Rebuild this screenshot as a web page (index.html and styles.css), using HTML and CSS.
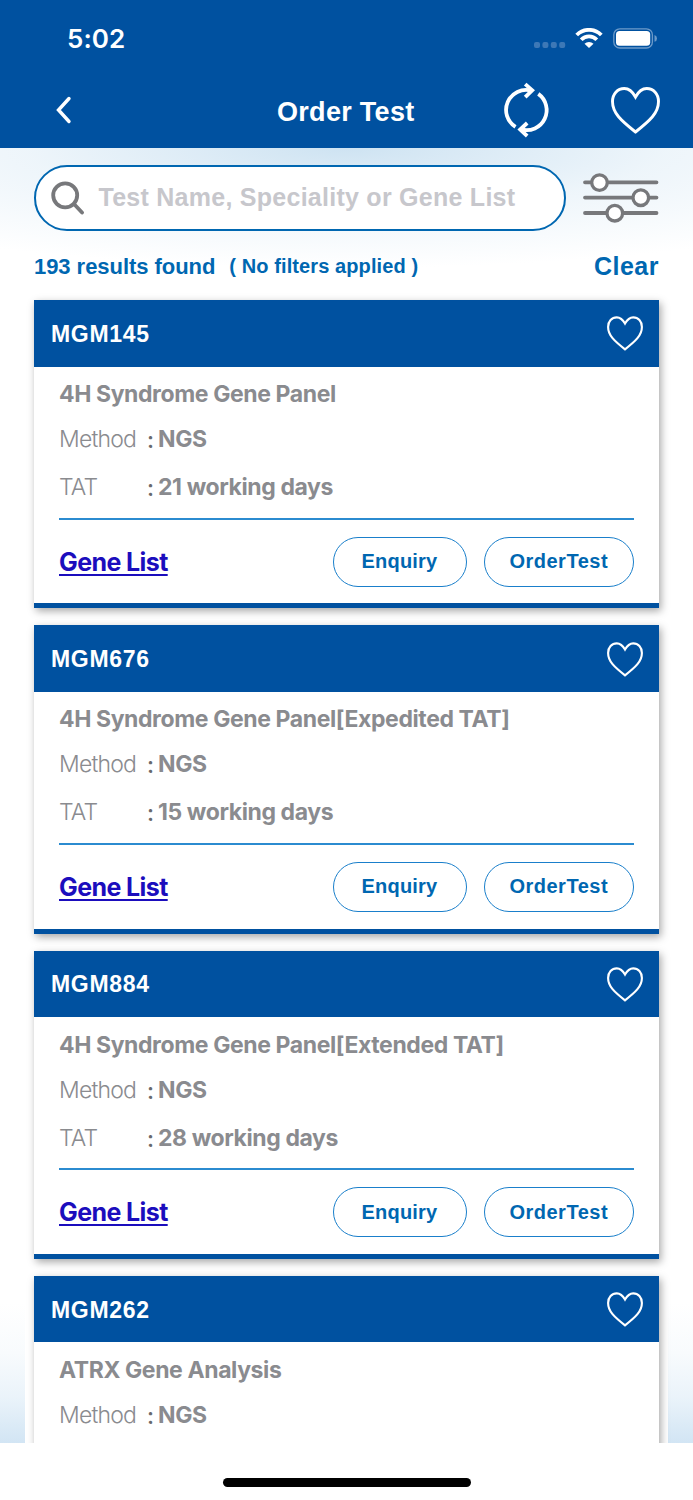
FILE: index.html
```
<!DOCTYPE html>
<html lang="en">

<head>
    <meta charset="UTF-8">
    <meta name="viewport" content="width=device-width, initial-scale=1.0">
    <title>Order Test</title>
    <link rel="stylesheet" href="styles.css">
</head>

<body>
    <svg class="defs" width="0" height="0">
        <symbol id="heart" viewBox="0 0 49 47">
            <path d="M24.5 10 C21.5 4.5 18 1.5 13.3 1.5 C6.5 1.5 1.5 7 1.5 14.5 C1.5 26 10 33.5 24.5 45 C39 33.5 47.5 26 47.5 14.5 C47.5 7 42.5 1.5 35.7 1.5 C31 1.5 27.5 4.5 24.5 10 Z" />
        </symbol>
    </svg>

    <header class="header">
        <div class="status-bar">
            <span class="time">5:02</span>
            <div class="status-icons">
                <svg class="signal" width="32" height="6" viewBox="0 0 32 6">
                    <rect x="0" width="6" height="6" rx="2" />
                    <rect x="8.4" width="6" height="6" rx="2" />
                    <rect x="16.8" width="6" height="6" rx="2" />
                    <rect x="25.2" width="6" height="6" rx="2" />
                </svg>
                <svg class="wifi" width="28" height="20" viewBox="0 0 28 20">
                    <path d="M1.7 7 A17.2 17.2 0 0 1 26.3 7" />
                    <path d="M6.2 11.8 A10.8 10.8 0 0 1 21.8 11.8" />
                    <path class="dot" d="M14 20 L9.5 15.7 A6.5 6.5 0 0 1 18.5 15.7 Z" />
                </svg>
                <svg class="battery" width="45" height="21" viewBox="0 0 45 21">
                    <rect class="case" x="0.8" y="0.8" width="38.6" height="19.2" rx="6" />
                    <rect x="3" y="3" width="34.2" height="14.8" rx="3.6" />
                    <path class="cap" d="M41.5 7 Q44 8 44 10.4 Q44 12.8 41.5 13.8 Z" />
                </svg>
            </div>
        </div>
        <div class="nav-bar">
            <svg class="back" width="16" height="28" viewBox="0 0 16 28">
                <path d="M13 2.5 L2.5 14 L13 25.5" />
            </svg>
            <h1>Order Test</h1>
            <svg class="refresh" width="46" height="56" viewBox="0 0 46 56">
                <path d="M11.5 44.9 A20 20 0 0 1 27.2 8.6" />
                <path d="M21.2 2.2 L28.2 8.4 L21.2 15.2" />
                <path d="M34.3 11.9 A20 20 0 0 1 17.2 47.4" />
                <path d="M23.2 41 L16.2 47.6 L23.2 54" />
            </svg>
            <svg class="heart"><use href="#heart" /></svg>
        </div>
    </header>

    <main class="content">
        <div class="search-row">
            <div class="search-box">
                <svg width="34" height="34" viewBox="0 0 34 34">
                    <circle cx="14.2" cy="14.3" r="12" />
                    <path d="M23 23 L31 31.5" />
                </svg>
                <span>Test Name, Speciality or Gene List</span>
            </div>
            <svg class="filter" width="76" height="50" viewBox="0 0 76 50">
                <path d="M2 9.3 H73.5 M2 24.6 H73.5 M2 40 H73.5" />
                <circle cx="16.5" cy="9.6" r="7.8" />
                <circle cx="57.8" cy="24.7" r="7.8" />
                <circle cx="31.8" cy="40.2" r="7.8" />
            </svg>
        </div>

        <div class="result-row">
            <span class="count">193 results found</span>
            <span class="applied">( No filters applied )</span>
            <span class="clear">Clear</span>
        </div>

        <div class="list">
            <div class="card">
                <div class="card-header">
                    <span class="code">MGM145</span>
                    <svg class="heart"><use href="#heart" /></svg>
                </div>
                <div class="card-body">
                    <div class="name">4H Syndrome Gene Panel</div>
                    <div class="row"><span class="label">Method</span><span class="colon">:</span><b>NGS</b></div>
                    <div class="row tat"><span class="label">TAT</span><span class="colon">:</span><b>21 working days</b></div>
                    <div class="actions">
                        <a class="gene-list" href="#">Gene List</a>
                        <button class="enquiry">Enquiry</button>
                        <button class="order">OrderTest</button>
                    </div>
                </div>
            </div>

            <div class="card">
                <div class="card-header">
                    <span class="code">MGM676</span>
                    <svg class="heart"><use href="#heart" /></svg>
                </div>
                <div class="card-body">
                    <div class="name">4H Syndrome Gene Panel[Expedited TAT]</div>
                    <div class="row"><span class="label">Method</span><span class="colon">:</span><b>NGS</b></div>
                    <div class="row tat"><span class="label">TAT</span><span class="colon">:</span><b>15 working days</b></div>
                    <div class="actions">
                        <a class="gene-list" href="#">Gene List</a>
                        <button class="enquiry">Enquiry</button>
                        <button class="order">OrderTest</button>
                    </div>
                </div>
            </div>

            <div class="card">
                <div class="card-header">
                    <span class="code">MGM884</span>
                    <svg class="heart"><use href="#heart" /></svg>
                </div>
                <div class="card-body">
                    <div class="name">4H Syndrome Gene Panel[Extended TAT]</div>
                    <div class="row"><span class="label">Method</span><span class="colon">:</span><b>NGS</b></div>
                    <div class="row tat"><span class="label">TAT</span><span class="colon">:</span><b>28 working days</b></div>
                    <div class="actions">
                        <a class="gene-list" href="#">Gene List</a>
                        <button class="enquiry">Enquiry</button>
                        <button class="order">OrderTest</button>
                    </div>
                </div>
            </div>

            <div class="card">
                <div class="card-header">
                    <span class="code">MGM262</span>
                    <svg class="heart"><use href="#heart" /></svg>
                </div>
                <div class="card-body">
                    <div class="name">ATRX Gene Analysis</div>
                    <div class="row"><span class="label">Method</span><span class="colon">:</span><b>NGS</b></div>
                </div>
            </div>
        </div>
    </main>

    <footer class="home-bar">
        <div class="home-indicator"></div>
    </footer>
</body>

</html>
```
FILE: styles.css
```
* {
    box-sizing: border-box;
}

body {
    margin: 0;
    height: 1500px;
    display: flex;
    flex-direction: column;
    overflow: hidden;
    background-color: #fff;
    font-family: "Liberation Sans", Arial, sans-serif;
    font-weight: bold;
    color: #0067b1;
}

svg {
    display: block;
    flex: none;
    fill: none;
    stroke-linecap: round;
}

.defs {
    position: absolute;
}

span,
.name,
b,
a {
    white-space: nowrap;
}

/* header */

.header {
    height: 147.5px;
    flex: none;
    background-color: #0051a0;
    color: #fff;
}

.status-bar {
    height: 76px;
    display: flex;
    align-items: center;
    justify-content: space-between;
    padding: 0 35.5px 0 67px;
}

.time {
    font-family: Inter, sans-serif;
    font-weight: 600;
    font-size: 26px;
    letter-spacing: 0.1px;
}

.status-icons {
    display: flex;
    align-items: center;
}

.signal {
    fill: #3d78b6;
    margin: 13px 8.5px 0 0;
}

.wifi {
    stroke: #fff;
    stroke-width: 3.8;
    stroke-linecap: butt;
    margin-right: 10px;
}

.wifi .dot {
    fill: #fff;
    stroke: none;
}

.battery {
    fill: #fff;
}

.battery .case {
    fill: none;
    stroke: #6c9ac9;
    stroke-width: 1.3;
}

.battery .cap {
    fill: #6c9ac9;
}

.nav-bar {
    height: 68px;
    display: grid;
    grid-template-columns: 170px 1fr 46px 49px;
    align-items: center;
    padding: 0 33px 0 56px;
}

.back {
    stroke: #fff;
    stroke-width: 3.4;
}

h1 {
    margin: 4px 0 0 51px;
    font-size: 27px;
    line-height: 30px;
    letter-spacing: 0.3px;
    white-space: nowrap;
}

.refresh {
    stroke: #fff;
    stroke-width: 3.8;
    stroke-linecap: butt;
}

.heart {
    stroke: #fff;
    stroke-width: 2.9;
    width: 36px;
    height: 35px;
}

.nav-bar .refresh {
    margin-left: -61px;
}

.nav-bar .heart {
    width: 49px;
    height: 47px;
}

/* search and results */

.content {
    height: 1295px;
    flex: none;
    overflow: hidden;
    padding: 17px 25px 0;
    background:
        radial-gradient(ellipse 640px 120px at 50% 0, #cee3f2, rgba(232, 242, 249, 0.75) 50%, rgba(255, 255, 255, 0)) no-repeat,
        linear-gradient(to top, #d2e5f4, #eaf3fa 45px, #f8fbfd 90px, #fff 140px);
}

.search-row {
    display: flex;
    align-items: center;
    gap: 17px;
    padding-left: 9px;
}

.search-box {
    width: 531.5px;
    height: 66.5px;
    display: flex;
    align-items: center;
    gap: 14px;
    padding-left: 14.5px;
    border: 2.5px solid #0067b1;
    border-radius: 34px;
    background-color: #fff;
    color: #c7c7cc;
    font-size: 25px;
    letter-spacing: 0.26px;
}

.search-box svg {
    stroke: #77787b;
    stroke-width: 3.8;
}

.filter {
    stroke: #77787b;
    stroke-width: 3.8;
}

.filter circle {
    fill: #fff;
    stroke-width: 3.3;
}

.result-row {
    height: 69px;
    display: flex;
    align-items: center;
    padding: 2px 9px 0 9px;
}

.count {
    font-size: 22px;
    margin-right: 14px;
    letter-spacing: -0.05px;
}

.applied {
    font-size: 20px;
    letter-spacing: 0.1px;
}

.clear {
    margin-left: auto;
    font-size: 25px;
    letter-spacing: 0.5px;
}

/* test cards */

.list {
    height: 1150px;
    background-color: #fff;
    padding: 0 9px;
}

.card {
    height: 308.3px;
    margin-bottom: 17px;
    background-color: #fff;
    border-bottom: 5px solid #0051a0;
    box-shadow: 2px 3px 8px rgba(0, 0, 0, 0.35);
}

.card-header {
    height: 66.5px;
    display: flex;
    align-items: center;
    justify-content: space-between;
    padding: 1px 16px 0 17px;
    background-color: #0051a0;
    color: #fff;
}

.code {
    padding-top: 1px;
    font-size: 23px;
    letter-spacing: 0.7px;
}

.card-body {
    padding: 12.5px 25px 0;
    font-family: Inter, sans-serif;
    font-size: 23px;
    line-height: 30px;
    color: #8a8b8f;
}

.name,
.row b {
    font-weight: 650;
    letter-spacing: -0.4px;
}

.row {
    height: 30px;
    display: flex;
    margin-top: 15px;
}

.tat {
    margin-top: 18px;
}

.label {
    width: 88px;
    font-weight: 350;
    letter-spacing: -0.8px;
}

.colon {
    width: 11px;
    padding-top: 1px;
    font-weight: 500;
    color: #68696c;
}

.actions {
    display: flex;
    align-items: center;
    margin-top: 15.5px;
    padding-top: 17px;
    border-top: 2px solid #2b8bd0;
}

.gene-list {
    margin-right: auto;
    font-weight: 650;
    font-size: 25px;
    letter-spacing: -0.6px;
    color: #1b0dbd;
    text-decoration-thickness: 1.5px;
    text-underline-offset: 3px;
}

button {
    height: 50px;
    padding: 0;
    border: 1.5px solid #1a7fcb;
    border-radius: 25px;
    background-color: #fff;
    font-family: "Liberation Sans", Arial, sans-serif;
    font-weight: bold;
    font-size: 20px;
    letter-spacing: 0.2px;
    color: #0067b1;
}

.enquiry {
    width: 134px;
}

.order {
    width: 150.5px;
    margin-left: 17px;
    letter-spacing: 0.5px;
}

/* home indicator */

.home-bar {
    flex: 1;
    display: flex;
    justify-content: center;
    padding-top: 35.5px;
    background-color: #fff;
}

.home-indicator {
    width: 248px;
    height: 8.5px;
    border-radius: 5px;
    background-color: #000;
}
```
